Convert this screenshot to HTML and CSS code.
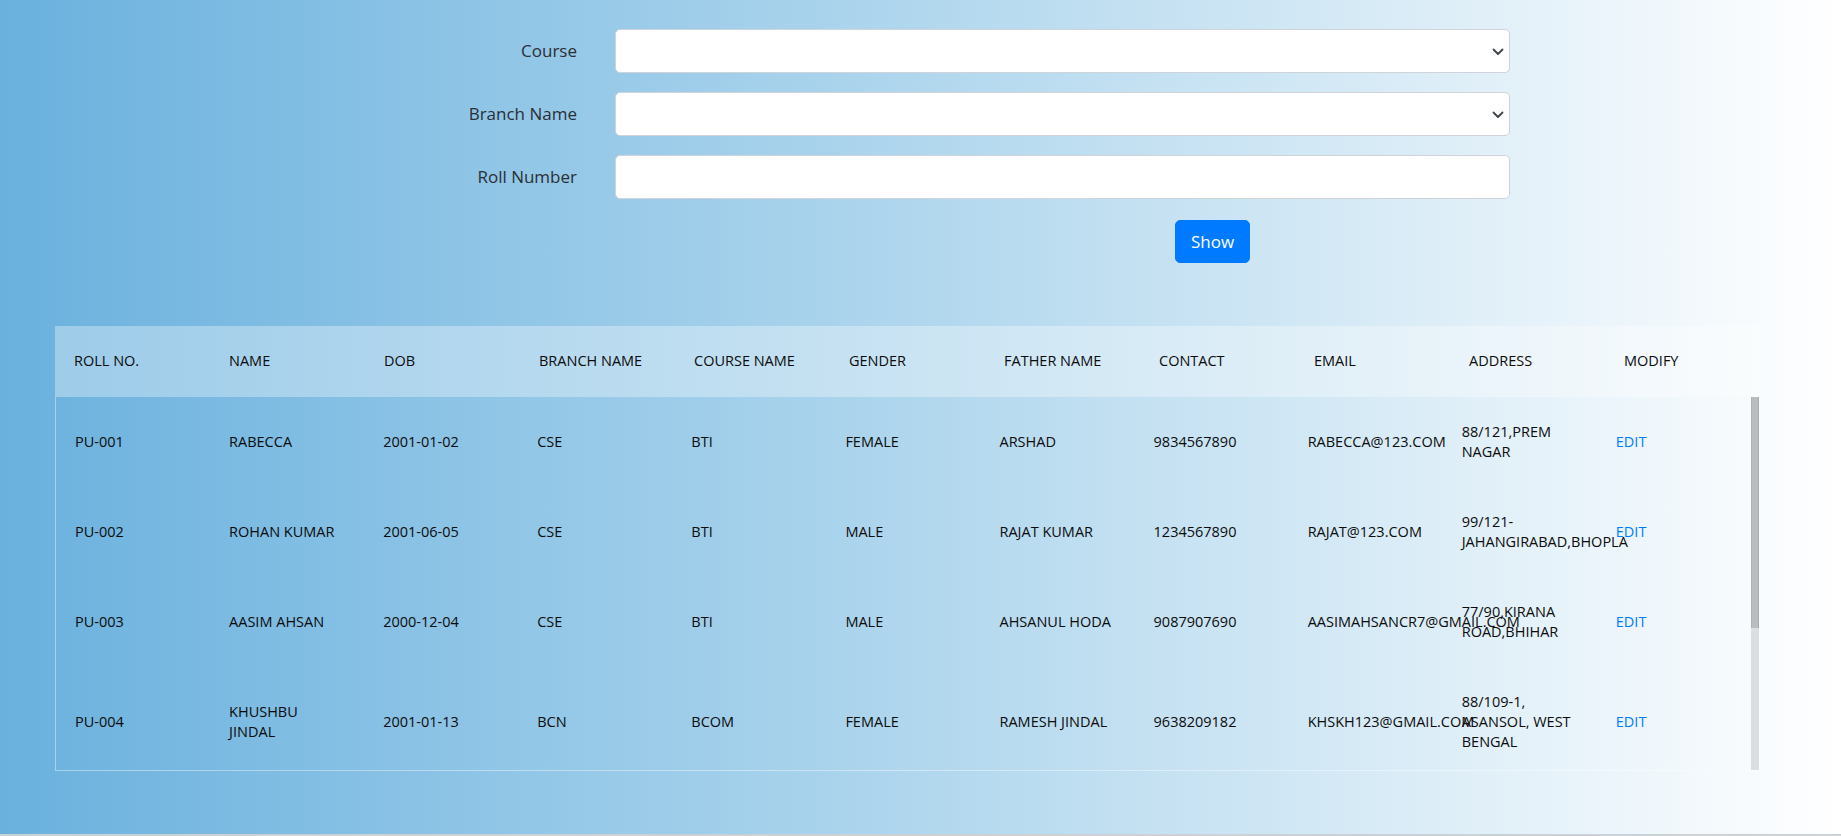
FILE: index.html
```html
<!DOCTYPE html>
<html lang="en">
<head>
<meta charset="utf-8">
<title>Student Records</title>
<link rel="stylesheet" href="styles.css">
</head>
<body>
<main class="page">
  <form class="filter">
    <label class="f-label" for="course">Course</label>
    <div class="select-wrap">
      <select id="course" class="f-control"><option></option></select>
      <svg class="chev" width="12" height="8" viewBox="0 0 12 8"><path d="M1.5 1.5 L6 6 L10.5 1.5" fill="none" stroke="#3d4348" stroke-width="1.8" stroke-linecap="round" stroke-linejoin="round"/></svg>
    </div>

    <label class="f-label" for="branch">Branch Name</label>
    <div class="select-wrap">
      <select id="branch" class="f-control"><option></option></select>
      <svg class="chev" width="12" height="8" viewBox="0 0 12 8"><path d="M1.5 1.5 L6 6 L10.5 1.5" fill="none" stroke="#3d4348" stroke-width="1.8" stroke-linecap="round" stroke-linejoin="round"/></svg>
    </div>

    <label class="f-label" for="roll">Roll Number</label>
    <input id="roll" class="f-control" type="text">

    <div class="actions"><button type="button" class="btn">Show</button></div>
  </form>

  <section class="records">
    <table class="grid grid-head">
      <thead>
        <tr>
          <th>ROLL NO.</th><th>NAME</th><th>DOB</th><th>BRANCH NAME</th><th>COURSE NAME</th><th>GENDER</th><th>FATHER NAME</th><th>CONTACT</th><th>EMAIL</th><th>ADDRESS</th><th>MODIFY</th>
        </tr>
      </thead>
    </table>
    <div class="body-frame">
      <div class="body-scroll">
        <table class="grid grid-body">
          <tbody>
            <tr><td>PU-001</td><td>RABECCA</td><td>2001-01-02</td><td>CSE</td><td>BTI</td><td>FEMALE</td><td>ARSHAD</td><td>9834567890</td><td>RABECCA@123.COM</td><td>88/121,PREM NAGAR</td><td><a class="edit" href="#">EDIT</a></td></tr>
            <tr><td>PU-002</td><td>ROHAN KUMAR</td><td>2001-06-05</td><td>CSE</td><td>BTI</td><td>MALE</td><td>RAJAT KUMAR</td><td>1234567890</td><td>RAJAT@123.COM</td><td>99/121-JAHANGIRABAD,BHOPLA</td><td><a class="edit" href="#">EDIT</a></td></tr>
            <tr><td>PU-003</td><td>AASIM AHSAN</td><td>2000-12-04</td><td>CSE</td><td>BTI</td><td>MALE</td><td>AHSANUL HODA</td><td>9087907690</td><td>AASIMAHSANCR7@GMAIL.COM</td><td>77/90,KIRANA ROAD,BHIHAR</td><td><a class="edit" href="#">EDIT</a></td></tr>
            <tr><td>PU-004</td><td>KHUSHBU JINDAL</td><td>2001-01-13</td><td>BCN</td><td>BCOM</td><td>FEMALE</td><td>RAMESH JINDAL</td><td>9638209182</td><td>KHSKH123@GMAIL.COM</td><td>88/109-1, ASANSOL, WEST BENGAL</td><td><a class="edit" href="#">EDIT</a></td></tr>
          </tbody>
        </table>
      </div>
      <div class="scrollbar" aria-hidden="true"><div class="thumb"></div></div>
    </div>
  </section>
</main>
</body>
</html>
```

FILE: styles.css
```css
* { box-sizing: border-box; }

html, body {
  margin: 0;
  padding: 0;
}

body {
  font-family: "Open Sans", "Noto Sans", sans-serif;
  color: #212529;
  background: linear-gradient(to right, #6ab1de 0%, #a9d3ec 45%, #ffffff 100%);
  min-height: 836px;
}

.page {
  height: 836px;
  padding-top: 29px;
  border-bottom: 2px solid #cdd1d4;
  overflow: hidden;
}

/* ---------- filter form ---------- */
.filter {
  display: grid;
  grid-template-columns: 180px 895px;
  column-gap: 38px;
  row-gap: 19px;
  margin-left: 397px;
  font-size: 17px;
}

.f-label {
  align-self: center;
  text-align: right;
  color: #2a2f35;
  line-height: 24px;
}

.select-wrap {
  position: relative;
}

.f-control {
  display: block;
  width: 100%;
  height: 44px;
  margin: 0;
  padding: 6px 14px;
  font: inherit;
  color: #495057;
  background: #fff;
  border: 1px solid #ced4da;
  border-radius: 5px;
  appearance: none;
  -webkit-appearance: none;
  outline: none;
}

.chev {
  position: absolute;
  right: 6px;
  top: 50%;
  margin-top: -3px;
  pointer-events: none;
}

.actions {
  grid-column: 2;
  margin-top: 2px;
  padding-left: 560px;
}

.btn {
  display: inline-block;
  height: 43px;
  padding: 0 15px;
  font: inherit;
  font-size: 17px;
  line-height: 41px;
  color: #fff;
  background: #007bff;
  border: 1px solid #007bff;
  border-radius: 5px;
}

/* ---------- records table ---------- */
.records {
  width: 1705px;
  margin: 63px 0 0 55px;
}

.grid {
  width: 100%;
  border-collapse: collapse;
  table-layout: fixed;
  font-size: 14.5px;
  line-height: 20px;
  color: #0c0c0c;
}

.grid-head {
  background: rgba(255, 255, 255, 0.33);
}

.grid-head th {
  text-align: left;
  font-weight: 400;
  padding: 25px 19px 26px;
  white-space: nowrap;
}

.body-frame {
  display: flex;
  height: 374px;
  border: 1px solid rgba(255, 255, 255, 0.4);
  border-top: none;
}

.body-scroll {
  flex: 1;
  min-width: 0;
  overflow: hidden;
}

.grid-body td {
  padding: 25px 19px;
  vertical-align: middle;
}

.edit {
  color: #007bff;
  text-decoration: none;
}

.scrollbar {
  flex: 0 0 8px;
  background: rgba(200, 204, 207, 0.6);
}

.thumb {
  height: 231px;
  background: #babdbf;
  border-left: 1px solid #b0b3b5;
  border-right: 1px solid #a8abad;
}
```
